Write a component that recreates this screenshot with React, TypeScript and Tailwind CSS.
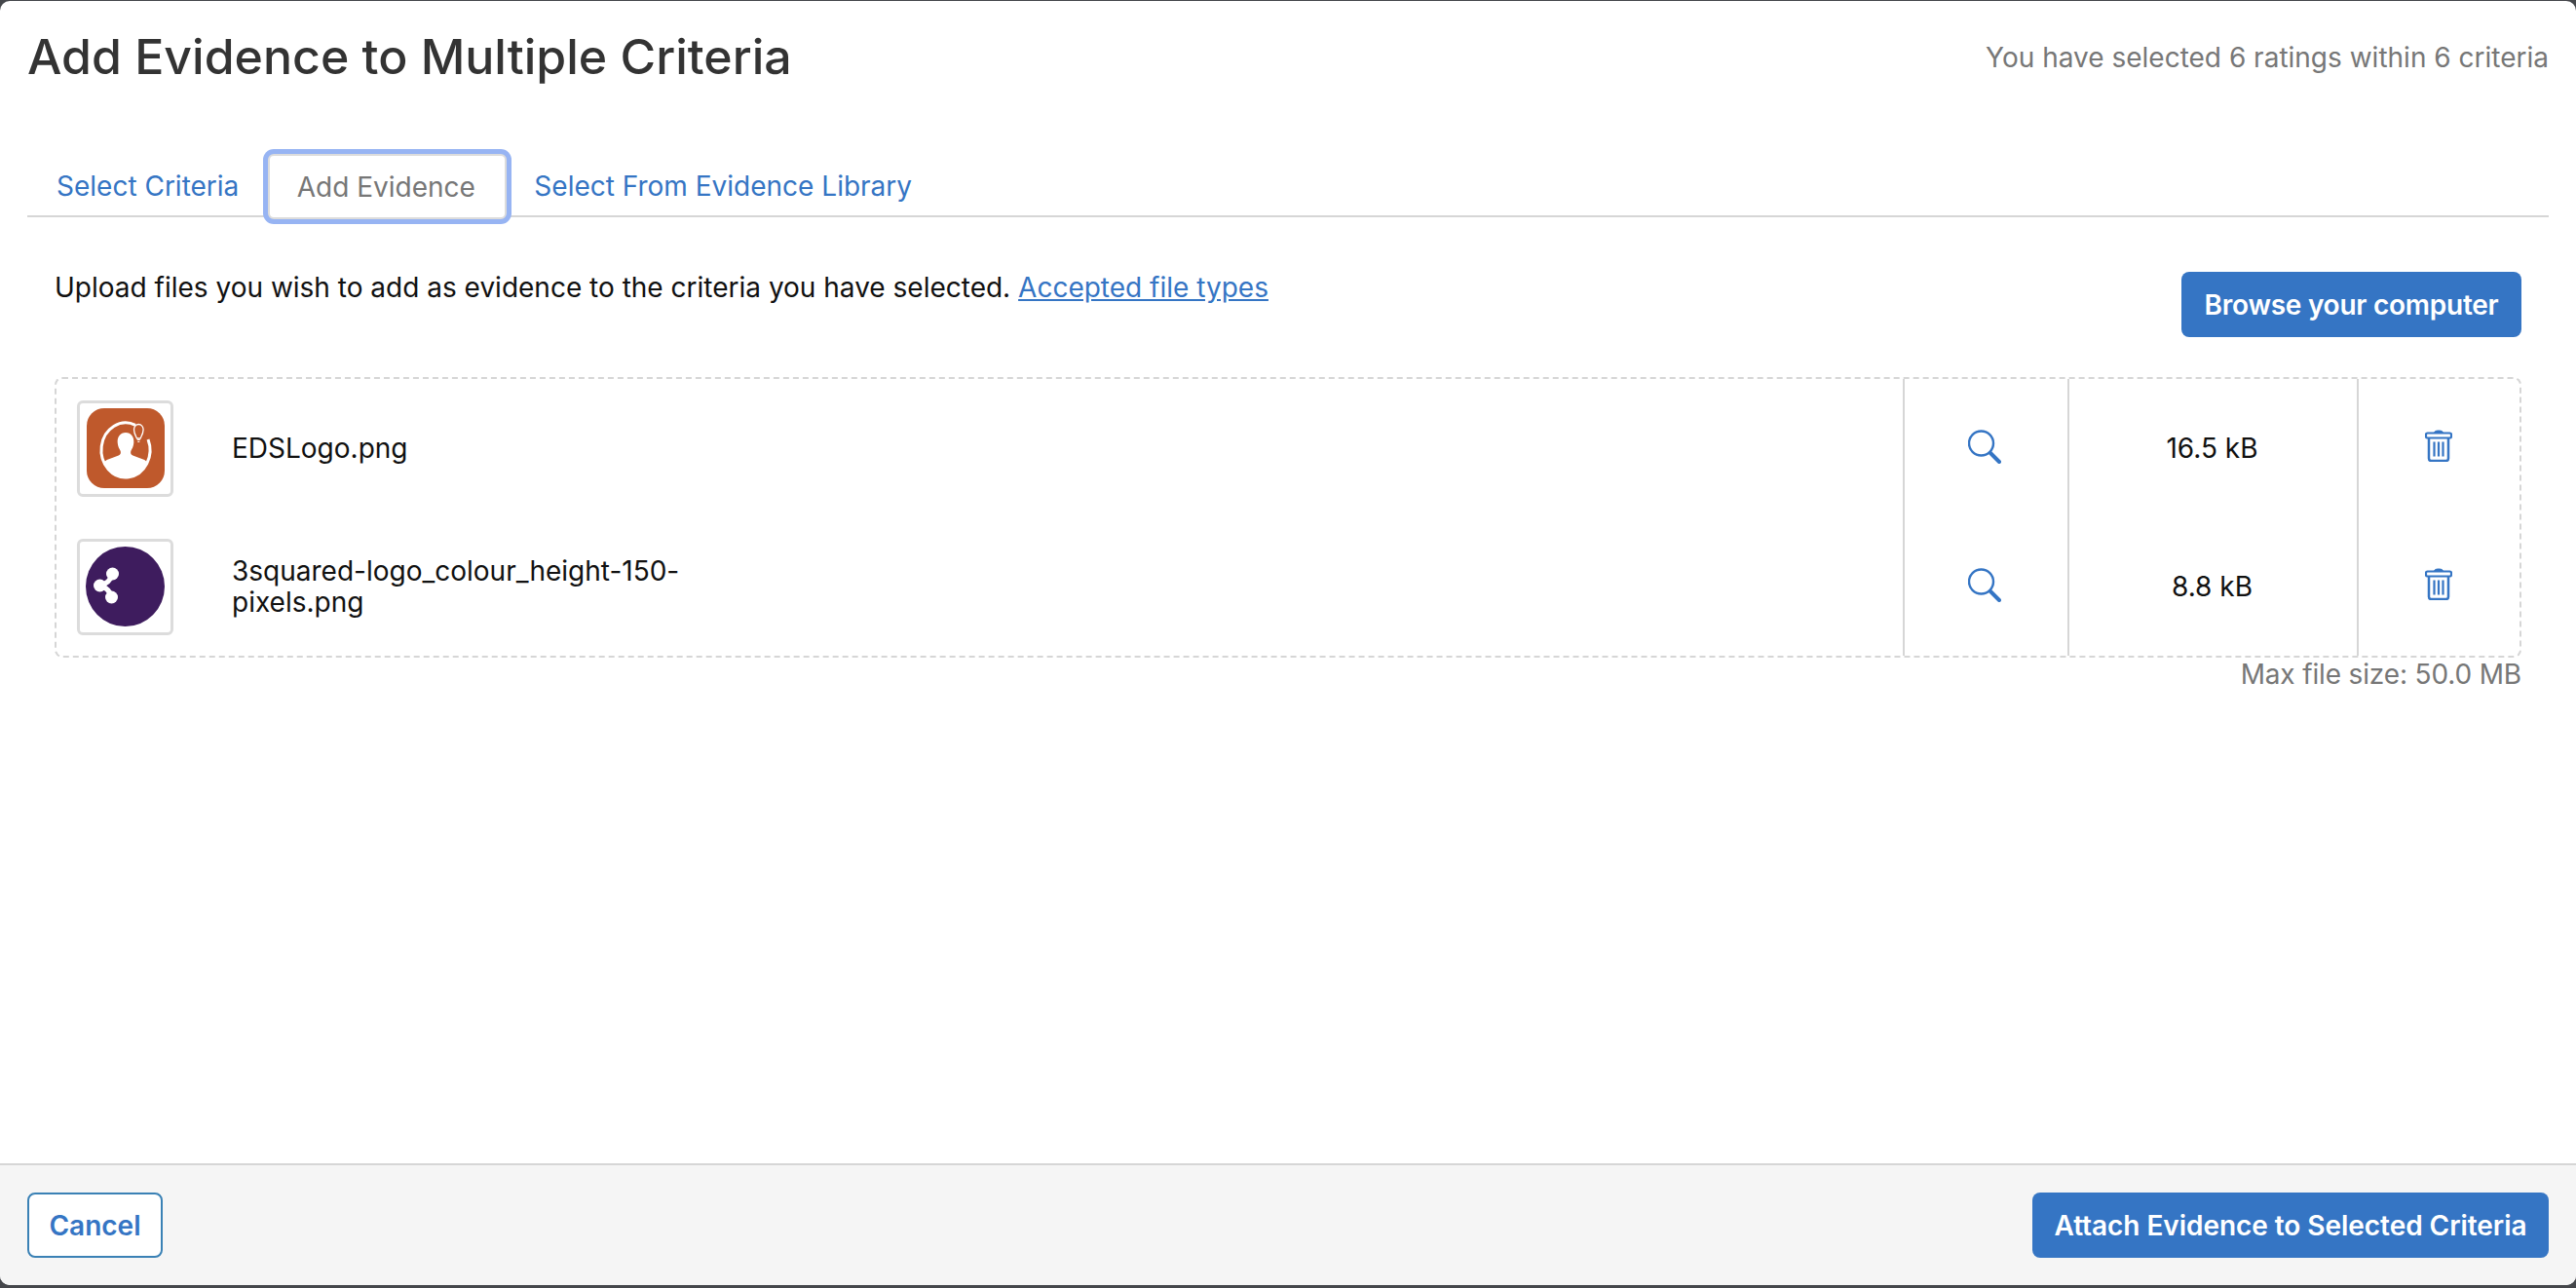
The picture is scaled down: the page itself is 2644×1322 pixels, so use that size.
const files = [
  { name: "EDSLogo.png", size: "16.5 kB", logo: "eds" },
  { name: "3squared-logo_colour_height-150-pixels.png", size: "8.8 kB", logo: "squared" },
];

function EdsLogo() {
  return (
    <svg viewBox="0 0 80 82" className="w-[80px] h-[82px]">
      <rect x="0" y="0" width="80" height="82" rx="18" fill="#bf592c" />
      <path d="M50 17.300A25 28 0 1 0 63 32" fill="none" stroke="#fff" strokeWidth="3" />
      <path d="M40 25c5.500 0 8.800 4.500 8.300 10.500-.3 3.500-1.600 6-3 8.500-.5 2 0 3.500 2 4.500l12 4.500 3.200 2.500A25 28 0 0 1 40 71a25 28 0 0 1-22.500-15.500l3.200-2.500 12-4.500c2-1 2.500-2.500 2-4.500-1.400-2.500-2.700-5-3-8.500-.5-6 2.800-10.500 8.300-10.500z" fill="#fff" />
      <path d="M51.500 31c-1.500-3-3-5.500-3-9a4.800 5.500 0 0 1 9.600 0c0 3.500-1.500 6-3 9z" fill="#bf592c" stroke="#fff" strokeWidth="1.300" />
      <path d="M51.800 32.500h3M52.300 34.500h2" stroke="#fff" strokeWidth="1.200" />
    </svg>
  );
}

function SquaredLogo() {
  return (
    <svg viewBox="0 0 80 82" className="w-[81px] h-[82px]">
      <ellipse cx="40" cy="41" rx="40.500" ry="41" fill="#3e1c5e" />
      <path d="M27 28Q24 38 14 40Q24 43 26 52" fill="none" stroke="#fff" strokeWidth="5" />
      <circle cx="27" cy="28" r="6.500" fill="#fff" />
      <circle cx="14" cy="40" r="6.500" fill="#fff" />
      <circle cx="26" cy="52" r="6.500" fill="#fff" />
    </svg>
  );
}

function SearchIcon() {
  return (
    <svg viewBox="0 0 34 35" className="w-[34px] h-[35px]" fill="none" stroke="#3575c4">
      <circle cx="13.500" cy="14" r="12.500" strokeWidth="2.400" />
      <path d="M23 24l9 9" strokeWidth="4" strokeLinecap="round" />
    </svg>
  );
}

function TrashIcon() {
  return (
    <svg viewBox="0 0 28 33" className="w-[28px] h-[33px]" fill="none" stroke="#3575c4">
      <path d="M9.500 3.500c0-2 2-2.500 4.500-2.500s4.500.5 4.500 2.500z" fill="#3575c4" strokeWidth="1" />
      <rect x="1" y="3.500" width="26" height="5" rx="1.500" strokeWidth="2.200" />
      <path d="M4 9v20.500a2.500 2.500 0 0 0 2.500 2.500h15a2.500 2.500 0 0 0 2.500-2.500V9" strokeWidth="2.500" />
      <path d="M9.500 12.500v15M14 12.500v15M18.500 12.500v15" strokeWidth="2.200" />
    </svg>
  );
}

export default function App() {
  return (
    <div className="h-[1322px] w-full bg-[#45474b] pt-px pb-[3px] font-['Inter','Liberation_Sans',sans-serif] text-[28px] text-[#111]">
      <div className="flex h-full flex-col overflow-hidden rounded-[10px] bg-white">
        <div className="flex h-[115px] items-center justify-between px-[28px]">
          <h1 className="pb-[2px] text-[50px] font-medium leading-none text-[#333]">Add Evidence to Multiple Criteria</h1>
          <span className="text-[#777]">You have selected 6 ratings within 6 criteria</span>
        </div>

        <div className="mx-[28px] mt-[42px] flex h-[65px] items-stretch border-b-2 border-[#d6d6d6]">
          <a className="flex items-center px-[30px] pt-[2px] text-[#3575c4]">Select Criteria</a>
          <a className="relative z-10 flex h-[67px] w-[245px] items-center justify-center rounded-md border-2 border-[#dcdcdc] bg-white pr-[3px] text-[#777] shadow-[0_0_0_5px_#97b4f3]">Add Evidence</a>
          <a className="flex items-center px-[28px] pt-[2px] text-[#3575c4]">Select From Evidence Library</a>
        </div>

        <div className="mx-[56px] mt-[56px] flex h-[88px] items-start justify-between">
          <p className="leading-[32px]">
            Upload files you wish to add as evidence to the criteria you have selected.{" "}
            <a className="text-[#3575c4] underline">Accepted file types</a>
          </p>
          <button className="h-[67px] w-[349px] rounded-lg bg-[#3575c4] font-semibold tracking-[-0.25px] text-white">Browse your computer</button>
        </div>

        <div className="mx-[56px] mt-[20px] rounded-lg border-2 border-dashed border-[#d6d6d6]">
          {files.map((file) => (
            <div key={file.name} className="flex h-[142px] items-stretch">
              <div className="flex flex-1 items-center pl-[21px]">
                <div className="flex h-[99px] w-[99px] shrink-0 items-center justify-center rounded-md border-[3px] border-[#dcdcdc]">
                  {file.logo === "eds" ? <EdsLogo /> : <SquaredLogo />}
                </div>
                <div className="ml-[60px] w-[480px] leading-[32px]">{file.name}</div>
              </div>
              <div className="flex w-[169px] items-center justify-center border-l-2 border-[#d6d6d6] pb-[4px] pr-[3px]"><SearchIcon /></div>
              <div className="flex w-[297px] items-center justify-center border-l-2 border-[#d6d6d6] pr-[2px]">{file.size}</div>
              <div className="flex w-[167px] items-center justify-center border-l-2 border-[#d6d6d6] pb-[6px] pr-[2px]"><TrashIcon /></div>
            </div>
          ))}
        </div>
        <div className="mx-[56px] mt-[1px] text-right leading-[32px] tracking-[-0.15px] text-[#777]">Max file size: 50.0 MB</div>

        <div className="mt-auto flex h-[125px] items-start justify-between border-t-2 border-[#d6d6d6] bg-[#f5f5f5] px-[28px] pt-[28px]">
          <button className="h-[67px] w-[139px] rounded-lg border-2 border-[#3a81b5] bg-white font-semibold text-[#3575c4]">Cancel</button>
          <button className="h-[67px] w-[530px] rounded-lg bg-[#3575c4] font-semibold tracking-[-0.05px] text-white">Attach Evidence to Selected Criteria</button>
        </div>
      </div>
    </div>
  );
}
